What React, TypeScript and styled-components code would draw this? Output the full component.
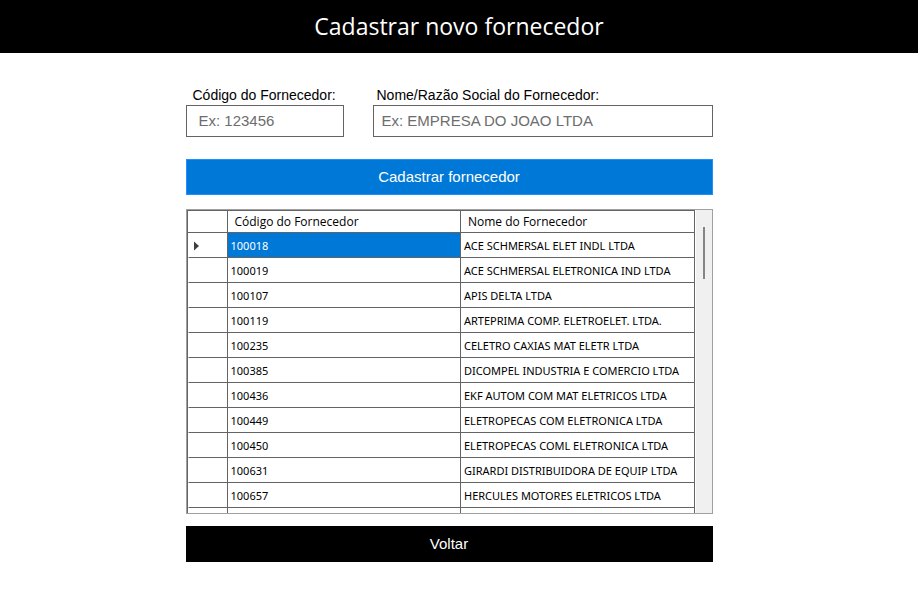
import React from "react";
import styled, { createGlobalStyle } from "styled-components";

const GlobalStyle = createGlobalStyle`
  * { box-sizing: border-box; }
  body { margin: 0; background: #fff; color: #000; font-family: "Liberation Sans", Arial, sans-serif; }
`;

const Header = styled.header`
  display: flex;
  align-items: center;
  justify-content: center;
  height: 53px;
  background: #000;
  color: #fff;
`;

const Title = styled.h1`
  margin: 0;
  padding-bottom: 2px;
  font: 400 23px/32px "Open Sans", "Noto Sans", sans-serif;
`;

const Content = styled.main`
  display: flex;
  flex-direction: column;
  width: 100%;
  max-width: 547px;
  margin: 0 auto;
  padding: 34px 20px 0 0;
`;

const Form = styled.form`
  display: flex;
  flex-direction: column;
  gap: 22px;
`;

const Fields = styled.div`
  display: flex;
  gap: 29px;
`;

const Field = styled.div<{ $grow: number }>`
  display: flex;
  flex: ${(p) => p.$grow} 1 0;
  flex-direction: column;
  gap: 2px;
  min-width: 0;
`;

const Label = styled.label<{ $inset: number }>`
  padding-left: ${(p) => p.$inset}px;
  font-size: 14px;
  line-height: 16px;
  white-space: nowrap;
`;

const TextBox = styled.input<{ $inset: number }>`
  width: 100%;
  height: 32px;
  padding: 0 4px 1px ${(p) => p.$inset}px;
  border: 1px solid #646464;
  border-radius: 0;
  background: #fff;
  color: #000;
  font: 15px/20px "Liberation Sans", Arial, sans-serif;

  &::placeholder {
    color: #6d6d6d;
    opacity: 1;
  }
`;

const Button = styled.button<{ $primary?: boolean }>`
  width: 100%;
  height: 36px;
  padding: 0;
  border: 1px solid ${(p) => (p.$primary ? "#1e90ff" : "#000")};
  background: ${(p) => (p.$primary ? "#0078d7" : "#000")};
  color: #fff;
  font: 15px/20px "Liberation Sans", Arial, sans-serif;
  cursor: pointer;
`;

const Grid = styled.section`
  display: flex;
  height: 305px;
  margin: 14px 0 12px;
  border: 1px solid #a0a0a0;
  overflow: hidden;
`;

const Viewport = styled.div`
  flex: 1;
  min-width: 0;
  overflow: hidden;
`;

const Table = styled.table`
  width: 100%;
  table-layout: fixed;
  border-collapse: separate;
  border-spacing: 0;
  border: solid #646464;
  border-width: 1px 0 0 1px;
`;

const MarkerCol = styled.col`
  width: 40px;
`;

const ColumnHead = styled.th`
  height: 22px;
  padding: 0 7px;
  border: solid #646464;
  border-width: 0 1px 1px 0;
  font: 400 12px/16px "Open Sans", "Noto Sans", sans-serif;
  text-align: left;
`;

const Cell = styled.td<{ $selected?: boolean }>`
  height: 25px;
  padding: 1px 3px 0;
  border: solid #646464;
  border-width: 0 1px 1px 0;
  background: ${(p) => (p.$selected ? "#0078d7" : "#fff")};
  color: ${(p) => (p.$selected ? "#fff" : "#000")};
  font: 11px/16px "Noto Sans", "Open Sans", sans-serif;
  white-space: nowrap;
`;

const MarkerCell = styled(Cell)`
  padding: 1px 4px 0;
  border-left: 1px solid #fff;
`;

const Marker = styled.svg`
  display: block;
  width: 6px;
  height: 10px;
  fill: #404040;
`;

const ScrollTrack = styled.div`
  display: flex;
  justify-content: center;
  width: 17px;
  padding-top: 17px;
  border-left: 1px solid #fff;
  background: #f0f0f0;
`;

const ScrollThumb = styled.div`
  width: 2px;
  height: 52px;
  background: #858585;
`;

const suppliers = [
  ["100018", "ACE SCHMERSAL ELET INDL LTDA"],
  ["100019", "ACE SCHMERSAL ELETRONICA IND LTDA"],
  ["100107", "APIS DELTA LTDA"],
  ["100119", "ARTEPRIMA COMP. ELETROELET. LTDA."],
  ["100235", "CELETRO CAXIAS MAT ELETR LTDA"],
  ["100385", "DICOMPEL INDUSTRIA E COMERCIO LTDA"],
  ["100436", "EKF AUTOM COM MAT ELETRICOS LTDA"],
  ["100449", "ELETROPECAS COM ELETRONICA LTDA"],
  ["100450", "ELETROPECAS COML ELETRONICA LTDA"],
  ["100631", "GIRARDI DISTRIBUIDORA DE EQUIP LTDA"],
  ["100657", "HERCULES MOTORES ELETRICOS LTDA"],
  ["", ""],
];

export default function App() {
  return (
    <>
      <GlobalStyle />
      <Header>
        <Title>Cadastrar novo fornecedor</Title>
      </Header>
      <Content>
        <Form onSubmit={(e) => e.preventDefault()}>
          <Fields>
            <Field $grow={158}>
              <Label htmlFor="codigo" $inset={7}>Código do Fornecedor:</Label>
              <TextBox id="codigo" $inset={12} placeholder="Ex: 123456" />
            </Field>
            <Field $grow={340}>
              <Label htmlFor="nome" $inset={4}>Nome/Razão Social do Fornecedor:</Label>
              <TextBox id="nome" $inset={8} placeholder="Ex: EMPRESA DO JOAO LTDA" />
            </Field>
          </Fields>
          <Button type="submit" $primary>Cadastrar fornecedor</Button>
        </Form>
        <Grid aria-label="Fornecedores">
          <Viewport>
            <Table>
              <colgroup>
                <MarkerCol />
                <col />
                <col />
              </colgroup>
              <thead>
                <tr>
                  <ColumnHead />
                  <ColumnHead scope="col">Código do Fornecedor</ColumnHead>
                  <ColumnHead scope="col">Nome do Fornecedor</ColumnHead>
                </tr>
              </thead>
              <tbody>
                {suppliers.map(([code, name], i) => (
                  <tr key={i}>
                    <MarkerCell>
                      {i === 0 && (
                        <Marker viewBox="0 0 6 10" aria-hidden="true">
                          <path d="M1 0.5 L6 5 L1 9.5Z" />
                        </Marker>
                      )}
                    </MarkerCell>
                    <Cell $selected={i === 0}>{code}</Cell>
                    <Cell>{name}</Cell>
                  </tr>
                ))}
              </tbody>
            </Table>
          </Viewport>
          <ScrollTrack>
            <ScrollThumb />
          </ScrollTrack>
        </Grid>
        <Button type="button">Voltar</Button>
      </Content>
    </>
  );
}
